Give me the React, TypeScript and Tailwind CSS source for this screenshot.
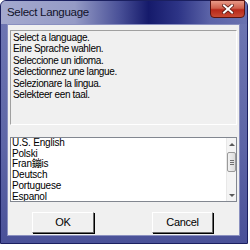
import React from 'react';

const font = { fontFamily: '"Liberation Sans Narrow", "Liberation Sans", Arial, sans-serif' };

const prompts = [
  'Select a language.',
  'Eine Sprache wahlen.',
  'Seleccione un idioma.',
  'Selectionnez une langue.',
  'Selezionare la lingua.',
  'Selekteer een taal.',
];

const languages = ['U.S. English', 'Polski', 'Fran鏰is', 'Deutsch', 'Portuguese', 'Espanol'];

function Button({ label, className }: { label: string; className?: string }) {
  return (
    <div className={`h-[21px] border border-t-white border-l-white border-r-[#696969] border-b-[#696969] bg-[#f0f0f0] shadow-[1px_1px_0_#000] flex items-center justify-center text-[11px] tracking-[-0.3px] text-black ${className ?? ''}`}>
      {label}
    </div>
  );
}

function ScrollBar() {
  return (
    <div className="w-[10px] h-full bg-[#f4f4f4] border-l border-[#e8e8e8] flex flex-col items-center">
      <div className="h-[12px] w-full flex items-center justify-center">
        <div className="w-0 h-0 border-l-[3px] border-r-[3px] border-b-[3px] border-l-transparent border-r-transparent border-b-[#5a5a5a]" />
      </div>
      <div className="mt-[2px] w-[9px] h-[20px] rounded-[2px] border border-[#9a9a9a] bg-gradient-to-r from-[#f2f2f2] to-[#dcdcdc] flex flex-col items-center justify-center gap-[1px]">
        <div className="w-[4px] h-px bg-[#707070]" />
        <div className="w-[4px] h-px bg-[#707070]" />
        <div className="w-[4px] h-px bg-[#707070]" />
      </div>
      <div className="flex-1" />
      <div className="h-[12px] w-full flex items-center justify-center">
        <div className="w-0 h-0 border-l-[3px] border-r-[3px] border-t-[3px] border-l-transparent border-r-transparent border-t-[#5a5a5a]" />
      </div>
    </div>
  );
}

export default function App() {
  return (
    <div className="w-[250px] h-[250px] bg-white" style={font}>
      <div className="relative w-[248px] h-[244px] rounded-t-[6px] border border-[#1b2060] bg-[linear-gradient(180deg,#7078b4_0%,#5d65a6_60%,#4a5198_100%)] px-[6px] pb-[7px] pr-[7px] flex flex-col">
        <div className="absolute inset-x-0 top-0 h-[23px] rounded-t-[5px] bg-[linear-gradient(90deg,#a4a9ce_0%,#959bc6_30%,#4a5198_48%,#151a6b_60%,#2d3486_72%,#5c64a8_85%,#6a72b0_100%)]" />
        <div className="relative h-[23px] flex items-center text-[11.5px] tracking-[-0.3px] text-[#10122a]">Select Language</div>
        <div className="absolute top-[-1px] right-[2px] w-[35px] h-[18px] rounded-b-[4px] border border-[#5a1410] bg-[linear-gradient(180deg,#e89a88_0%,#d0604c_45%,#b8281a_55%,#c84a34_100%)] flex items-center justify-center">
          <svg width="12" height="10" viewBox="0 0 12 10">
            <path d="M2 1.5 L10 8.5 M10 1.5 L2 8.5" stroke="#5a1a14" strokeWidth="3.6" strokeLinecap="square" />
            <path d="M2 1.5 L10 8.5 M10 1.5 L2 8.5" stroke="#fff" strokeWidth="2" strokeLinecap="square" />
          </svg>
        </div>

        <div className="relative flex-1 bg-[#f0f0f0] border border-[#8a90c0] flex flex-col px-[2px] pt-[5px]">
          <div className="h-[95px] border border-t-[#a0a0a0] border-l-[#a0a0a0] border-b-white border-r-white bg-[#f0f0f0] pl-[2px] pt-[1px] text-[10px] leading-[11.4px] tracking-[-0.35px] text-black">
            {prompts.map((p) => (
              <div key={p}>{p}</div>
            ))}
          </div>

          <div className="mt-[12px] h-[65px] border border-[#828790] bg-white flex overflow-hidden">
            <div className="flex-1 pl-[1px] text-[10px] leading-[10.7px] tracking-[-0.2px] text-black">
              {languages.map((l) => (
                <div key={l} style={{ fontFamily: '"Liberation Sans Narrow", "Liberation Sans", "Noto Sans CJK SC", sans-serif' }}>{l}</div>
              ))}
            </div>
            <ScrollBar />
          </div>

          <div className="mt-[10px] flex pl-[22px]">
            <Button label="OK" className="w-[62px]" />
            <Button label="Cancel" className="w-[61px] ml-[58px]" />
          </div>
        </div>
      </div>
    </div>
  );
}
